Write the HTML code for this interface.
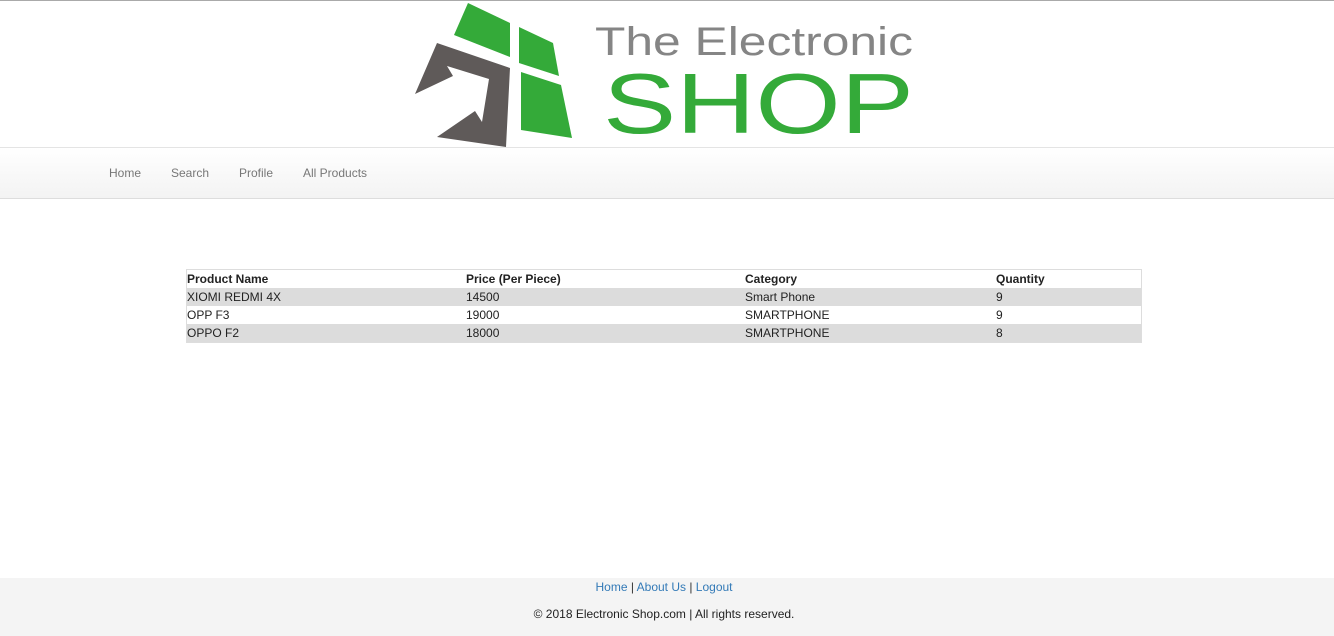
<!DOCTYPE html>
<html><head><style>
body{margin:0;font-family:"Liberation Sans",Arial,sans-serif;background:#fff;width:1334px;height:636px;position:relative;overflow:hidden}
.top{position:absolute;top:0;left:0;width:1334px;height:1px;background:#aaa}
.nav{position:absolute;top:147px;left:0;width:1334px;height:50px;background:linear-gradient(#fff,#f3f3f3);border-top:1px solid #e4e4e4;border-bottom:1px solid #ddd}
.nav a{position:absolute;top:18px;font-size:12px;color:#777;text-decoration:none}
table{position:absolute;top:269px;left:186px;width:956px;border-collapse:collapse;font-size:12px;color:#222;border:1px solid #ddd}
td,th{height:18px;padding:0;text-align:left;line-height:18px}
th{font-weight:bold;background:#fff}
tr.g td{background:#dcdcdc}
.foot{position:absolute;top:578px;left:-3px;width:1334px;height:58px;background:#f4f4f4;font-size:12px;text-align:center}
.foot .l{position:absolute;top:2px;width:100%;color:#333}
.foot .l a{color:#337ab7;text-decoration:none}
.foot .c{position:absolute;top:29px;width:100%;color:#222}
.fbg{position:absolute;top:578px;left:0;width:1334px;height:58px;background:#f4f4f4}
</style></head><body>
<div class="top"></div>
<svg style="position:absolute;left:0;top:0" width="1334" height="147">
<polygon fill="#34aa39" points="454,35 468,3 510,23 510,57"/>
<polygon fill="#34aa39" points="519,27 553,43 559,76 519,63"/>
<polygon fill="#34aa39" points="521,72 561,85 572,138 521,130"/>
<polygon fill="#5f5a59" points="437,43 510,68 506,147 437,137 475,111 482,122 489,79 447,66 453,76 415,94"/>
<text x="595" y="55" font-family="Liberation Sans" font-size="40" fill="#858585" textLength="318" lengthAdjust="spacingAndGlyphs">The Electronic</text>
<text x="603" y="133" font-family="Liberation Sans" font-size="90" fill="#34aa39" textLength="311" lengthAdjust="spacingAndGlyphs" transform="translate(0,133) scale(1,0.95) translate(0,-133)">SHOP</text>
</svg>
<div class="nav"><a style="left:109px">Home</a><a style="left:171px">Search</a><a style="left:239px">Profile</a><a style="left:303px">All Products</a></div>
<table>
<tr><th style="width:279px">Product Name</th><th style="width:279px">Price (Per Piece)</th><th style="width:251px">Category</th><th>Quantity</th></tr>
<tr class="g"><td>XIOMI REDMI 4X</td><td>14500</td><td>Smart Phone</td><td>9</td></tr>
<tr><td>OPP F3</td><td>19000</td><td>SMARTPHONE</td><td>9</td></tr>
<tr class="g"><td>OPPO F2</td><td>18000</td><td>SMARTPHONE</td><td>8</td></tr>
</table>
<div class="fbg"></div>
<div class="foot" style="background:none"><div class="l"><a>Home</a> | <a>About Us</a> | <a>Logout</a></div><div class="c">© 2018 Electronic Shop.com | All rights reserved.</div></div>
</body></html>
